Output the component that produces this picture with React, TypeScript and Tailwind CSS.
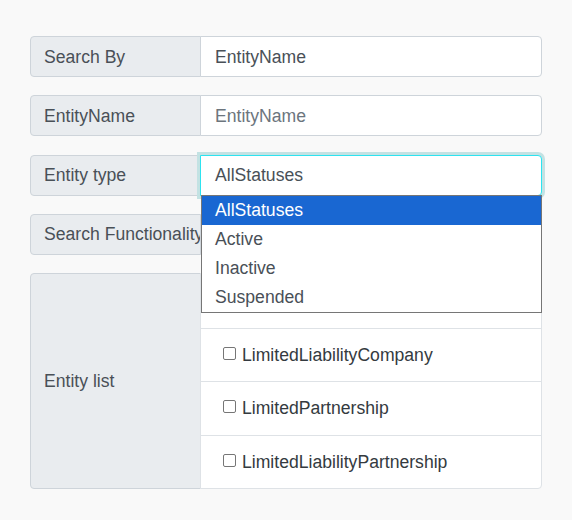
import * as React from "react";

const labelCls =
  "flex w-[171px] shrink-0 items-center whitespace-nowrap rounded-l-[4px] border border-[#ced4da] bg-[#e9ecef] px-[13px] text-[#495057]";

const entityTypes = ["AllStatuses", "Active", "Inactive", "Suspended"];
const entities = ["LimitedLiabilityCompany", "LimitedPartnership", "LimitedLiabilityPartnership"];

const Row = ({ label, children }: { label: string; children: React.ReactNode }) => (
  <div className="relative flex h-[41px]">
    <div className={labelCls}>{label}</div>
    {children}
  </div>
);

export default function App() {
  return (
    <div
      className="min-h-[520px] w-[572px] bg-[#f9f9f9] pl-[30px] pt-[36px] text-[17.6px] leading-[26px]"
      style={{ fontFamily: '"Liberation Sans", Arial, sans-serif' }}
    >
      <div className="flex w-[512px] flex-col gap-[18.3px]">
        <Row label="Search By">
          <div className="-ml-px flex flex-1 items-center rounded-r-[4px] border border-[#ced4da] bg-white px-[14px] text-[#495057]">
            EntityName
          </div>
        </Row>

        <Row label="EntityName">
          <div className="-ml-px flex flex-1 items-center rounded-r-[4px] border border-[#ced4da] bg-white px-[14px] text-[#6c757d]">
            EntityName
          </div>
        </Row>

        <div className="relative z-10">
          <Row label="Entity type">
            <div className="relative -ml-px flex-1">
              <div className="flex h-full items-center rounded-r-[4px] border border-[#2de3f0] bg-white px-[14px] text-[#495057] shadow-[0_0_0_3px_#c3e2e3]">
                AllStatuses
              </div>
              <ul className="absolute left-px top-[calc(100%-1px)] w-[341px] border border-[#767676] bg-white">
                {entityTypes.map((t, i) => (
                  <li
                    key={t}
                    className={
                      i === 0
                        ? "flex h-[29px] items-center bg-[#1967d2] px-[13px] text-white"
                        : "flex h-[29px] items-center px-[13px] text-[#495057]"
                    }
                  >
                    {t}
                  </li>
                ))}
              </ul>
            </div>
          </Row>
        </div>

        <Row label="Search Functionality">
          <div className="-ml-px flex-1 rounded-r-[4px] border border-[#ced4da] bg-white" />
        </Row>

        <div className="flex">
          <div className={labelCls + " h-[216px]"}>Entity list</div>
          <div className="-ml-px flex flex-1 flex-col rounded-r-[4px] border border-[#dee2e6] bg-white">
            <div className="h-[53.5px]" />
            {entities.map((e) => (
              <div
                key={e}
                className="flex h-[53.5px] items-center gap-[6px] border-t border-[#dee2e6] pl-[22px] text-[#343a40]"
              >
                <span className="mb-[3px] inline-block size-[13px] rounded-[2px] border border-[#767676] bg-white" />
                {e}
              </div>
            ))}
          </div>
        </div>
      </div>
    </div>
  );
}
